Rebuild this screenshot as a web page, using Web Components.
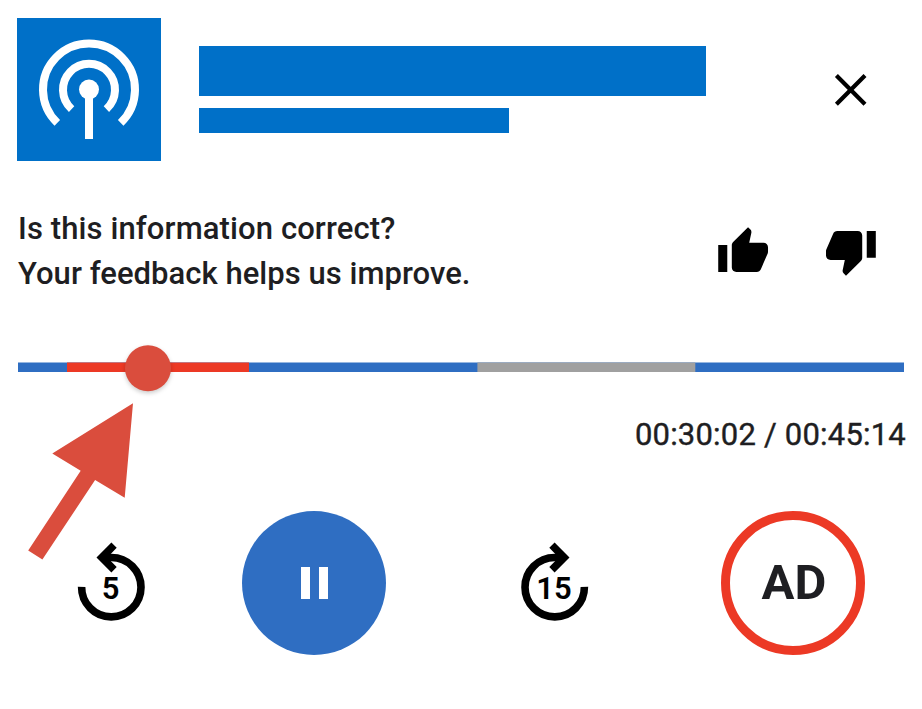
<!DOCTYPE html>
<html lang="en">
<head>
<meta charset="utf-8">
<title>Audio player</title>
<style>
html,body{margin:0;background:#fff}
body{font-family:Roboto,"Liberation Sans",sans-serif;color:#1e1e22}
</style>
</head>
<body>
<audio-player></audio-player>
<script>
const define = (name, html) => customElements.define(name, class extends HTMLElement {
  constructor() {
    super();
    const t = document.createElement('template');
    t.innerHTML = html;
    this.attachShadow({mode: 'open'}).append(t.content.cloneNode(true));
  }
});

define('station-header', `
<style>
:host{display:flex;height:143px;padding:18px 53px 0 17px}
svg{display:block;flex:none}
.art{background:#0070c8}
.bars{display:flex;flex-direction:column;gap:12px;margin:28px 0 0 38px;flex:1}
.bars i{display:block;background:#0070c8}
.title{width:507px;height:50px}
.sub{width:310px;height:25px}
.close{margin-top:54px}
</style>
<svg class="art" width="144" height="143" viewBox="17 18 144 143" fill="none" stroke="#fff" stroke-width="8">
<path d="M57.3 122.8A46 46 0 1 1 120.7 122.8"/>
<path d="M71.6 109.1A26 26 0 1 1 106.4 109.1"/>
<circle cx="89" cy="89.5" r="10" fill="#fff" stroke="none"/>
<path d="M89 90V139"/></svg>
<div class="bars"><i class="title"></i><i class="sub"></i></div>
<svg class="close" width="36" height="36" viewBox="0 0 36 36" stroke="#000" stroke-width="4.2"><path d="M3.4 3.6L32 32.2M32 3.6L3.4 32.2"/></svg>`);

define('feedback-prompt', `
<style>
:host{display:flex;justify-content:space-between;padding:45px 46px 0 18px;height:90px}
p{margin:0;font-weight:500;font-size:31px;line-height:45px;white-space:nowrap}
.a{letter-spacing:.11px}.b{letter-spacing:.04px}
.votes{display:flex;gap:58px;padding-top:20.7px}
svg{display:block;overflow:visible}
.down{margin-top:4.3px}
</style>
<div><p class="a">Is this information correct?</p><p class="b">Your feedback helps us improve.</p></div>
<div class="votes">
<svg width="49.8" height="44.7" viewBox="0.9 0.9 22 20" preserveAspectRatio="none"><path d="M1 21h4V9H1v12zm22-11c0-1.1-.9-2-2-2h-6.31l.95-4.57.03-.32c0-.41-.17-.79-.44-1.06L14.17 1 7.59 7.59C7.22 7.95 7 8.45 7 9v10c0 1.1.9 2 2 2h9c.83 0 1.54-.5 1.84-1.22l3.02-7.05c.09-.23.14-.47.14-.73v-2z"/></svg>
<svg class="down" width="49.8" height="44.7" viewBox="1 3 22 20" preserveAspectRatio="none"><path d="M15 3H6c-.83 0-1.54.5-1.84 1.22l-3.02 7.05c-.09.23-.14.47-.14.73v2c0 1.1.9 2 2 2h6.31l-.95 4.57-.03.32c0 .41.17.79.44 1.06L9.83 23l6.59-6.59c.36-.36.58-.86.58-1.41V5c0-1.1-.9-2-2-2zm4 0v12h4V3h-4z"/></svg>
</div>`);

define('seek-bar', `
<style>
:host{display:block;padding:49px 0 0 18px;height:72px}
svg{display:block;overflow:visible}
circle{filter:drop-shadow(0 2px 2px #0003)}
</style>
<svg width="886" height="46" viewBox="18 345 886 46">
<path fill="#2f6ec2" d="M18 362.5H904V372H18z"/>
<path fill="#ec3925" d="M67 362.5H249V372H67z"/>
<path fill="#a0a0a0" d="M477.4 362.5H695.3V372H477.4z"/>
<circle cx="148" cy="368.2" r="23" fill="#da4d3d"/>
</svg>`);

define('time-readout', `
<style>
:host{display:block;height:36px;padding:0 16px 0 0;text-align:right;font-size:31px;line-height:36px;font-weight:400;-webkit-text-stroke:.4px currentColor;letter-spacing:.2px;white-space:nowrap}
</style><slot></slot>`);

define('skip-button', `
<style>:host{display:block}svg{display:block}
text{font:600 31px Roboto,sans-serif;text-anchor:middle}
:host([forward]) .ring{transform:translateX(68px) scaleX(-1)}
:host(:not([forward])) .f,:host([forward]) .b{display:none}</style>
<svg width="68" height="80" viewBox="0 0 68 80">
<g class="ring"><path d="M4.6 44.9A29.7 29.7 0 1 0 34.3 15.5H29" fill="none" stroke="#000" stroke-width="7.6"/>
<path d="M19.5 15.4L34.4 0.4L39.7 5.8L30.3 15.4L39.7 25.1L34.4 30.4z"/></g>
<text class="b" x="33.6" y="57">5</text><text class="f" x="33" y="57">15</text>
</svg>`);

define('pause-button', `
<style>:host{display:flex;align-items:center;justify-content:center;gap:8.8px;width:144px;height:144px;border-radius:50%;background:#2f6ec2}
i{width:9.3px;height:32px;background:#fff}</style><i></i><i></i>`);

define('ad-button', `
<style>:host{display:flex;align-items:center;justify-content:center;box-sizing:border-box;width:144px;height:144px;border-radius:50%;border:9.5px solid #ec3925;padding:0 0 2px 2px;font-size:49px;font-weight:700;line-height:57px}
</style><slot></slot>`);

define('player-controls', `
<style>:host{display:flex;align-items:flex-start;padding:58px 0 0 77px}
skip-button{margin-top:31px}
pause-button{margin-left:97.4px}
.fwd{margin-left:134.6px}
ad-button{margin-left:132px}</style>
<skip-button></skip-button><pause-button></pause-button><skip-button class="fwd" forward></skip-button><ad-button>AD</ad-button>`);

define('pointer-arrow', `
<style>:host{position:absolute;left:26px;top:402px}svg{display:block}</style>
<svg width="110" height="160" viewBox="26 402 110 160"><path fill="#da4d3d" d="M133 403.3L52.3 453.4L80.7 470.8L28.2 550.5L42.4 559.6L95.1 480L124.7 497.8z"/></svg>`);

define('audio-player', `
<style>:host{display:block;position:relative;width:922px;height:709px;overflow:hidden}</style>
<station-header></station-header>
<feedback-prompt></feedback-prompt>
<seek-bar></seek-bar>
<time-readout>00:30:02 / 00:45:14</time-readout>
<player-controls></player-controls>
<pointer-arrow></pointer-arrow>`);
</script>
</body>
</html>
